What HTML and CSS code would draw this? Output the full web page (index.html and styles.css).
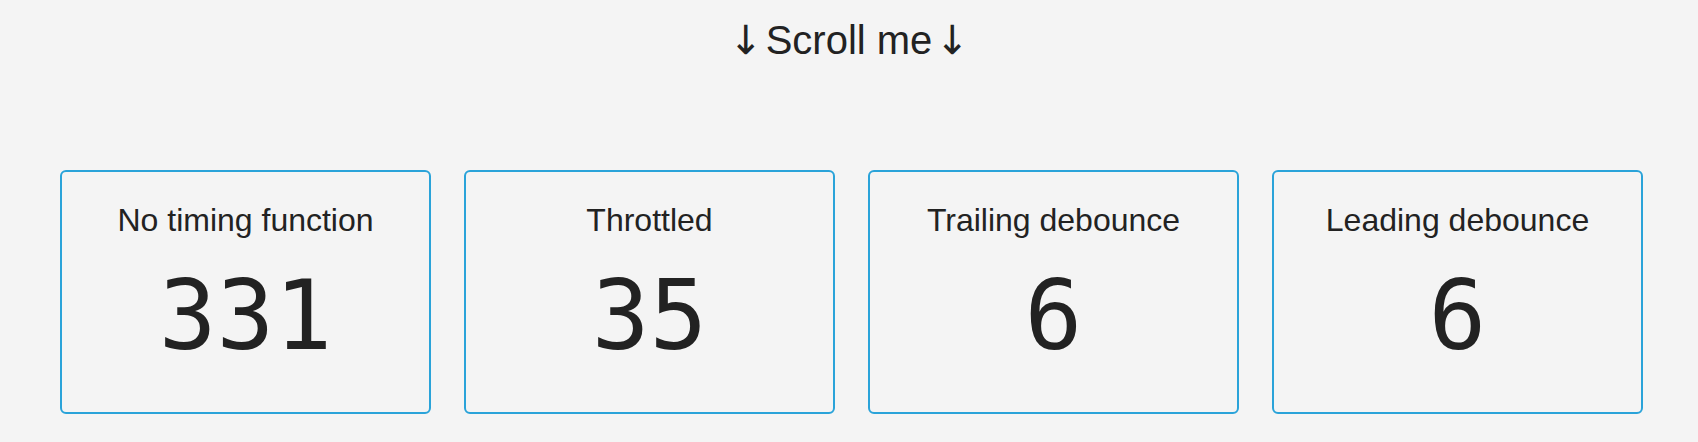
FILE: index.html
```html
<!DOCTYPE html>
<html lang="en">
<head>
<meta charset="utf-8">
<title>Scroll me</title>
<link rel="stylesheet" href="styles.css">
</head>
<body>
  <h1 class="title"><span class="arrow">↓</span> <span class="title-text">Scroll me</span> <span class="arrow">↓</span></h1>
  <div class="counters">
    <div class="card">
      <div class="label">No timing function</div>
      <div class="count">331</div>
    </div>
    <div class="card">
      <div class="label">Throttled</div>
      <div class="count">35</div>
    </div>
    <div class="card">
      <div class="label">Trailing debounce</div>
      <div class="count">6</div>
    </div>
    <div class="card">
      <div class="label">Leading debounce</div>
      <div class="count">6</div>
    </div>
  </div>
</body>
</html>
```
FILE: styles.css
```css
html, body {
  margin: 0;
  padding: 0;
  background: #f4f4f4;
  color: #222;
  font-family: "Liberation Sans", Arial, sans-serif;
}

.title {
  margin: 17px 0 0;
  font-size: 40px;
  line-height: 46px;
  font-weight: normal;
  text-align: center;
  word-spacing: -8px;
}

.title-text {
  word-spacing: normal;
}

.arrow {
  font-family: "DejaVu Sans", sans-serif;
}

.counters {
  display: flex;
  gap: 33px;
  padding-left: 60px;
  margin-top: 107px;
}

.card {
  box-sizing: border-box;
  width: 371px;
  height: 244px;
  border: 2px solid #2aa3d9;
  border-radius: 6px;
  padding: 30px 0 40px;
  text-align: center;
}

.label {
  font-size: 32px;
  line-height: 37px;
}

.count {
  margin-top: 21px;
  font-family: "DejaVu Sans Mono", monospace;
  font-size: 96px;
  line-height: 112px;
}
```
